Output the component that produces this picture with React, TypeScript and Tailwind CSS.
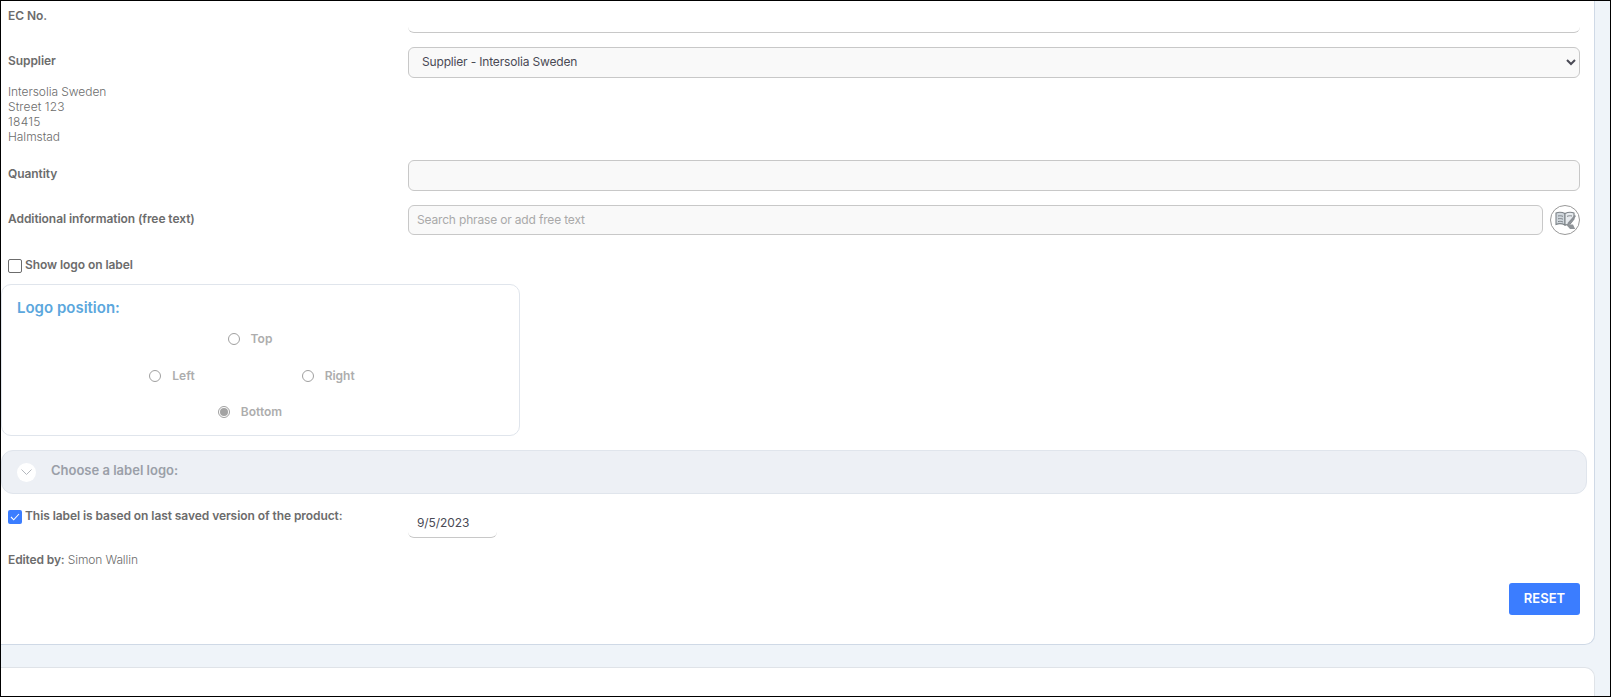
import type { ReactNode } from 'react';

const FONT = 'font-["Inter","Liberation_Sans",sans-serif]';

function FieldLabel({ children }: { children: ReactNode }) {
  return <label className="block text-xs font-semibold leading-[15px] tracking-[-0.07px] text-[#6c6c6c]">{children}</label>;
}

function Radio({ label, checked }: { label: string; checked?: boolean }) {
  return (
    <div className="flex items-center gap-[11px]">
      <span className="flex h-3 w-3 items-center justify-center rounded-full border border-[#a0a0a0] bg-white">
        {checked && <span className="h-[8px] w-[8px] rounded-full bg-[#a3a3a3]" />}
      </span>
      <span className="text-xs font-semibold leading-[15px] text-[#adadad]">{label}</span>
    </div>
  );
}

// book with pencil, the phrase lookup button
function PhraseIcon() {
  return (
    <svg width="21" height="20" viewBox="0 0 21 20" fill="none">
      <path d="M1 3c3-1.200 6-1 9 .6v11.400c-3-1.600-6-1.800-9-.6z" fill="#cfd6dc" stroke="#7d8388" strokeWidth="1.100" />
      <path d="M10 3.600c3-1.600 6-1.800 9-.6v6l-4 5-5 1z" fill="#e6eaee" stroke="#7d8388" strokeWidth="1.100" />
      <path d="M3 6c1.800-.4 3.500-.3 5 .4M3 8.800c1.800-.4 3.500-.3 5 .4M3 11.600c1.800-.4 3.500-.3 5 .4M12 6.400c1.500-.7 3-.8 5-.4" stroke="#7d8388" strokeWidth="1" />
      <path d="M20 4.500 13 12.500l-1 2.500 2.600-1L20.800 6.500z" fill="#8b9095" />
      <path d="M11 14.500h7l2.200 4.500h-5.200z" fill="#8f9498" />
    </svg>
  );
}

export default function App() {
  return (
    <div className={`${FONT} flex h-[697px] flex-col overflow-hidden border border-black bg-[#eff4f9]`}>
      <div className="h-[644px] w-[1594px] shrink-0 rounded-br-[10px] border-r border-b border-[#cfd9e6] bg-white pl-[7px] pr-[14px]">
        {/* EC No. */}
        <div className="flex h-[32px] items-start">
          <div className="w-[400px] pt-[7px]">
            <FieldLabel>EC No.</FieldLabel>
          </div>
          <div className="h-[32px] flex-1 rounded-[6px] border-b border-[#c8c8c8] bg-white" />
        </div>

        {/* Supplier */}
        <div className="mt-[14px] flex items-start">
          <div className="w-[400px] pt-[6px]">
            <FieldLabel>Supplier</FieldLabel>
          </div>
          <select className="h-[31px] flex-1 rounded-[6px] border border-[#c8c8c8] bg-[#f9f9f9] pb-[2px] pl-[9px] text-xs tracking-[-0.17px] text-[#4a4a55] outline-none">
            <option>Supplier - Intersolia Sweden</option>
          </select>
        </div>
        <div className="mt-[6px] text-xs font-light leading-[15px] text-[#6c6c6c]">
          <div className="tracking-[-0.05px]">Intersolia Sweden</div>
          <div className="tracking-[0.1px]">Street 123</div>
          <div className="tracking-[0.3px]">18415</div>
          <div className="tracking-[-0.05px]">Halmstad</div>
        </div>

        {/* Quantity */}
        <div className="mt-[16px] flex items-start">
          <div className="w-[400px] pt-[6px]">
            <FieldLabel>Quantity</FieldLabel>
          </div>
          <div className="h-[31px] flex-1 rounded-[6px] border border-[#c8c8c8] bg-[#f9f9f9]" />
        </div>

        {/* Additional information */}
        <div className="mt-[14px] flex items-start">
          <div className="w-[400px] pt-[6px]">
            <FieldLabel>Additional information (free text)</FieldLabel>
          </div>
          <div className="flex flex-1 items-center gap-[7px]">
            <input
              placeholder="Search phrase or add free text"
              className="h-[30px] flex-1 rounded-[6px] border border-[#c8c8c8] bg-[#f9f9f9] pb-[2px] pl-[8px] text-xs tracking-[-0.17px] text-[#4a4a55] outline-none placeholder:text-[#a9a9a9]"
            />
            <button className="flex h-[30px] w-[30px] items-center justify-center rounded-full border border-[#999999] bg-white">
              <PhraseIcon />
            </button>
          </div>
        </div>

        {/* Show logo */}
        <div className="mt-[22px] flex h-[16px] items-start gap-[3px]">
          <span className="mt-[2px] h-[14px] w-[14px] rounded-[2px] border border-[#6c6c6c] bg-white" />
          <FieldLabel>Show logo on label</FieldLabel>
        </div>

        {/* Logo position */}
        <div className="-ml-[7px] mt-[11px] h-[152px] w-[519px] rounded-[10px] border border-[#e0e5ec] bg-white pl-[15px] pt-[13px]">
          <h4 className="text-[15px] font-semibold leading-[20px] text-[#5ba7dd]">Logo position:</h4>
          <div className="ml-[-18px] mt-[13px] flex w-[502px] flex-col items-center">
            <Radio label="Top" />
            <div className="mt-[22px] flex gap-[107px] pl-[4px]">
              <Radio label="Left" />
              <Radio label="Right" />
            </div>
            <div className="mt-[21px]">
              <Radio label="Bottom" checked />
            </div>
          </div>
        </div>

        {/* Accordion */}
        <div className="-ml-[7px] mt-[14px] flex h-[44px] w-[1586px] items-center rounded-[12px] border border-[#e0e5ec] bg-[#edf0f5] pl-[15px]">
          <span className="flex h-[19px] w-[19px] items-center justify-center rounded-full bg-white">
            <svg width="11" height="6" viewBox="0 0 11 6" fill="none">
              <path d="M.5.5l5 5 5-5" stroke="#b4b8be" strokeWidth="1" />
            </svg>
          </span>
          <span className="ml-[15px] pb-[2px] text-[13px] font-semibold text-[#9a9fa8]">Choose a label logo:</span>
        </div>

        {/* Based on last saved */}
        <div className="mt-[14px] flex items-start">
          <div className="flex w-[400px] items-start gap-[3px]">
            <span className="mt-[2px] flex h-[14px] w-[14px] items-center justify-center rounded-[2px] bg-[#3b7dff]">
              <svg width="10" height="8" viewBox="0 0 10 8" fill="none">
                <path d="M1 4l2.700 2.800L9 1" stroke="#fff" strokeWidth="1.100" />
              </svg>
            </span>
            <FieldLabel>This label is based on last saved version of the product:</FieldLabel>
          </div>
          <div className="flex h-[30px] w-[89px] items-center rounded-[6px] border-b border-[#c8c8c8] pl-[9px] text-xs tracking-[-0.1px] text-[#4a4a55]">
            9/5/2023
          </div>
        </div>

        <div className="mt-[14px] text-xs font-light leading-[15px] tracking-[-0.12px] text-[#6c6c6c]">
          <span className="font-semibold">Edited by:</span> Simon Wallin
        </div>

        <div className="mt-[16px] flex justify-end">
          <button className="h-[32px] w-[71px] rounded-[3px] bg-[#3b7dff] text-[13px] font-semibold text-white">RESET</button>
        </div>
      </div>

      <div className="mt-[22px] h-[40px] w-[1594px] shrink-0 rounded-tr-[10px] border-t border-r border-[#dfe3e8] bg-white" />
    </div>
  );
}
